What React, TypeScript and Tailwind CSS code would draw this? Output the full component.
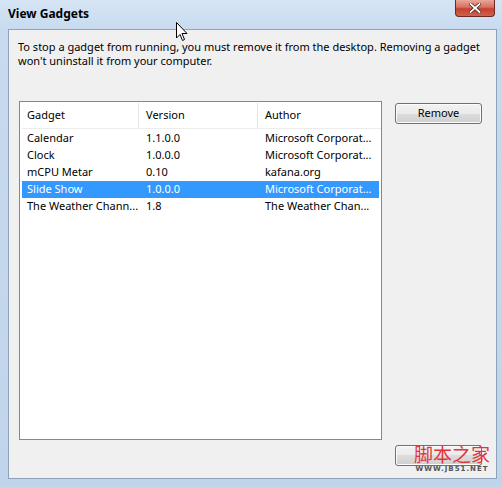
import React from "react";

const rows = [
  { g: "Calendar", v: "1.1.0.0", a: "Microsoft Corporat..." },
  { g: "Clock", v: "1.0.0.0", a: "Microsoft Corporat..." },
  { g: "mCPU Metar", v: "0.10", a: "kafana.org" },
  { g: "Slide Show", v: "1.0.0.0", a: "Microsoft Corporat...", sel: true },
  { g: "The Weather Chann...", v: "1.8", a: "The Weather Chan..." },
];

function Btn({ label }: { label?: string }) {
  return (
    <div className="w-[87px] h-[21px] rounded-[3px] border border-[#707070] bg-[linear-gradient(#f2f2f2_0%,#ebebeb_50%,#dddddd_50%,#cfcfcf_100%)] shadow-[inset_0_0_0_1px_#fcfcfc] flex items-center justify-center text-[11px] text-black">
      {label}
    </div>
  );
}

export default function App() {
  return (
    <div
      className="relative w-[502px] h-[487px] overflow-hidden bg-[linear-gradient(180deg,#d6e5f5_0%,#c7daef_30px,#c0d4eb_100%)] flex flex-col"
      style={{ fontFamily: '"Noto Sans", "Open Sans", sans-serif' }}
    >
      {/* title bar */}
      <div className="h-[29px] shrink-0 relative">
        <div className="absolute left-[8px] top-[6px] text-[12px] font-bold text-black leading-[16px]">View Gadgets</div>
        <div className="absolute left-[455px] top-0 w-[40px] h-[17px] rounded-b-[4px] border border-t-0 border-[#6d2a22] bg-[linear-gradient(#e9a797_0%,#d6705f_45%,#c7412f_55%,#d0624b_100%)] flex items-center justify-center">
          <svg width="12" height="10" viewBox="0 0 12 10">
            <path d="M1.5 1 L10.5 9 M10.5 1 L1.5 9" stroke="#3a1a14" strokeWidth="3.2" strokeLinecap="square" />
            <path d="M1.5 1 L10.5 9 M10.5 1 L1.5 9" stroke="#ffffff" strokeWidth="1.8" strokeLinecap="square" />
          </svg>
        </div>
      </div>
      {/* client area */}
      <div className="flex-1 ml-[8px] mr-[5px] mb-[8px] border border-[#8ea2b8] bg-[#f0f0f0] pl-[9px] pt-[10px] flex flex-col">
        <p className="text-[11px] leading-[14px] text-black whitespace-nowrap">
          To stop a gadget from running, you must remove it from the desktop. Removing a gadget
          <br />
          won't uninstall it from your computer.
        </p>
        <div className="flex items-start mt-[33px]">
          <div className="ml-[1px] w-[363px] h-[339px] border border-[#828790] bg-white pl-[2px] pt-[1px]">
            <div className="flex h-[26px] items-center text-[11px] text-black border-b border-[#ececec]">
              <div className="w-[117px] pl-[5px] h-full flex items-center border-r border-[#e5e5e5]">Gadget</div>
              <div className="w-[119px] pl-[7px] h-full flex items-center border-r border-[#e5e5e5]">Version</div>
              <div className="pl-[7px]">Author</div>
            </div>
            <div className="pt-[1px]">
              {rows.map((r) => (
                <div
                  key={r.g}
                  className={`flex h-[17px] items-center text-[11px] w-[357px] ${r.sel ? "bg-[#3399ff] text-white" : "text-black"}`}
                >
                  <div className="w-[117px] pl-[5px] whitespace-nowrap overflow-hidden">{r.g}</div>
                  <div className="w-[119px] pl-[7px] whitespace-nowrap overflow-hidden">{r.v}</div>
                  <div className="pl-[7px] whitespace-nowrap overflow-hidden">{r.a}</div>
                </div>
              ))}
            </div>
          </div>
          <div className="ml-[13px] mt-[2px] h-[363px] flex flex-col justify-between">
            <Btn label="Remove" />
            <Btn />
          </div>
        </div>
      </div>
      {/* watermark */}
      <div className="absolute left-[413px] top-[443px] w-[78px] flex flex-col items-center">
        <div className="text-[19px] leading-[22px] text-[#e0353c]" style={{ fontFamily: '"Noto Sans CJK SC", sans-serif' }}>
          脚本之家
        </div>
        <div className="text-[7px] leading-[9px] font-bold text-[#555] tracking-[1px]" style={{ fontFamily: '"DejaVu Sans", sans-serif' }}>
          WWW.JB51.NET
        </div>
      </div>
      {/* cursor */}
      <svg className="absolute left-[176px] top-[22px]" width="12" height="20" viewBox="0 0 12 20">
        <path d="M0.5 0.5 L0.5 16 L4 12.5 L6.5 18.5 L8.5 17.5 L6 11.5 L11 11.5 Z" fill="#ffffff" stroke="#000000" strokeWidth="1" strokeLinejoin="miter" />
      </svg>
    </div>
  );
}
